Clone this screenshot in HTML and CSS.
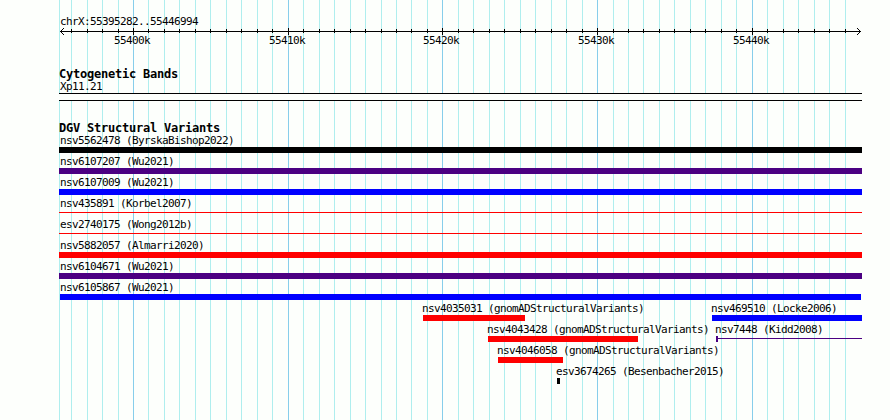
FILE: index.html
```
<!DOCTYPE html>
<html lang="en">
<head>
    <meta charset="UTF-8">
    <title>chrX:55395282..55446994</title>
    <link rel="stylesheet" href="styles.css">
</head>
<body>

<div class="browser">
    <!-- Vertical grid, one line per 1k, darker every 10k -->
    <svg class="grid" width="890" height="420">
        <path class="minor" d="M59.5 0v420M71.5 0v420M87.5 0v420M102.5 0v420M118.5 0v420M148.5 0v420M164.5 0v420M179.5 0v420M195.5 0v420M210.5 0v420M226.5 0v420M241.5 0v420M257.5 0v420M272.5 0v420M303.5 0v420M319.5 0v420M334.5 0v420M350.5 0v420M365.5 0v420M381.5 0v420M396.5 0v420M411.5 0v420M427.5 0v420M458.5 0v420M473.5 0v420M489.5 0v420M504.5 0v420M520.5 0v420M535.5 0v420M551.5 0v420M566.5 0v420M582.5 0v420M613.5 0v420M628.5 0v420M643.5 0v420M659.5 0v420M674.5 0v420M690.5 0v420M705.5 0v420M721.5 0v420M736.5 0v420M767.5 0v420M783.5 0v420M798.5 0v420M814.5 0v420M829.5 0v420M845.5 0v420"/>
        <path class="major" d="M133.5 0v420M288.5 0v420M442.5 0v420M597.5 0v420M752.5 0v420"/>
    </svg>

    <div class="tracks">
        <!-- Scale -->
        <div class="ruler">
            <div class="label region">chrX:55395282..55446994</div>
            <svg class="axis" width="803" height="8" viewBox="59 28 803 8">
                <path d="M60 31.5h801M71.5 29v4M87.5 29v4M102.5 29v4M118.5 29v4M133.5 28v7M148.5 29v4M164.5 29v4M179.5 29v4M195.5 29v4M210.5 29v4M226.5 29v4M241.5 29v4M257.5 29v4M272.5 29v4M288.5 28v7M303.5 29v4M319.5 29v4M334.5 29v4M350.5 29v4M365.5 29v4M381.5 29v4M396.5 29v4M411.5 29v4M427.5 29v4M442.5 28v7M458.5 29v4M473.5 29v4M489.5 29v4M504.5 29v4M520.5 29v4M535.5 29v4M551.5 29v4M566.5 29v4M582.5 29v4M597.5 28v7M613.5 29v4M628.5 29v4M643.5 29v4M659.5 29v4M674.5 29v4M690.5 29v4M705.5 29v4M721.5 29v4M736.5 29v4M752.5 28v7M767.5 29v4M783.5 29v4M798.5 29v4M814.5 29v4M829.5 29v4M845.5 29v4"/>
                <path d="M61 30.5h1M62 29.5h1M63 28.5h1M61 32.5h1M62 33.5h1M63 34.5h1M859 30.5h1M858 29.5h1M857 28.5h1M859 32.5h1M858 33.5h1M857 34.5h1"/>
            </svg>
            <div class="ticks">
                <span class="label" style="margin-left: 55px">55400k</span>
                <span class="label" style="margin-left: 119px">55410k</span>
                <span class="label" style="margin-left: 118px">55420k</span>
                <span class="label" style="margin-left: 119px">55430k</span>
                <span class="label" style="margin-left: 119px">55440k</span>
            </div>
        </div>

        <!-- Cytogenetic bands -->
        <div class="track cyto">
            <h2>Cytogenetic Bands</h2>
            <div class="label">Xp11.21</div>
            <div class="band"></div>
        </div>

        <!-- Structural variants -->
        <div class="track">
            <h2>DGV Structural Variants</h2>
            <div class="lane full"><div class="feature" style="width: 803px"><div class="label">nsv5562478 (ByrskaBishop2022)</div><div class="bar black"></div></div></div>
            <div class="lane full"><div class="feature" style="width: 803px"><div class="label">nsv6107207 (Wu2021)</div><div class="bar indigo"></div></div></div>
            <div class="lane full"><div class="feature" style="width: 803px"><div class="label">nsv6107009 (Wu2021)</div><div class="bar blue"></div></div></div>
            <div class="lane full"><div class="feature" style="width: 803px"><div class="label">nsv435891 (Korbel2007)</div><div class="bar red thin"></div></div></div>
            <div class="lane full"><div class="feature" style="width: 803px"><div class="label">esv2740175 (Wong2012b)</div><div class="bar red thin"></div></div></div>
            <div class="lane full"><div class="feature" style="width: 803px"><div class="label">nsv5882057 (Almarri2020)</div><div class="bar red"></div></div></div>
            <div class="lane full"><div class="feature" style="width: 803px"><div class="label">nsv6104671 (Wu2021)</div><div class="bar indigo"></div></div></div>
            <div class="lane"><div class="feature" style="margin-left: 1px; width: 801px"><div class="label first">nsv6105867 (Wu2021)</div><div class="bar blue"></div></div></div>
            <div class="lane">
                <div class="feature" style="margin-left: 364px; width: 102px"><div class="label">nsv4035031 (gnomADStructuralVariants)</div><div class="bar red"></div></div>
                <div class="feature" style="margin-left: 187px; width: 150px"><div class="label">nsv469510 (Locke2006)</div><div class="bar blue"></div></div>
            </div>
            <div class="lane">
                <div class="feature" style="margin-left: 429px; width: 150px"><div class="label">nsv4043428 (gnomADStructuralVariants)</div><div class="bar red"></div></div>
                <div class="feature" style="margin-left: 78px; width: 146px"><div class="label">nsv7448 (Kidd2008)</div><div class="bar indigo thin capped"></div></div>
            </div>
            <div class="lane"><div class="feature" style="margin-left: 439px; width: 65px"><div class="label">nsv4046058 (gnomADStructuralVariants)</div><div class="bar red"></div></div></div>
            <div class="lane"><div class="feature" style="margin-left: 498px; width: 3px"><div class="label">esv3674265 (Besenbacher2015)</div><div class="bar black"></div></div></div>
        </div>
    </div>
</div>

</body>
</html>
```
FILE: styles.css
```
body {
    margin: 0;
    background-color: #fdfffc;
    color: #000;
    font-family: "DejaVu Sans Mono", "Liberation Mono", monospace;
}
.browser {
    display: grid;
    width: 890px;
    height: 420px;
    overflow: hidden;
}
.grid,
.tracks {
    grid-area: 1 / 1;
}
.grid {
    display: block;
}
.grid path {
    fill: none;
    stroke-width: 1;
}
.grid .minor {
    stroke: #afeeee;
}
.grid .major {
    stroke: #87ceeb;
}
.tracks {
    z-index: 1;
    width: 803px;
    padding: 15px 0 0 59px;
}
.label {
    height: 13px;
    margin-left: 1px;
    font-size: 11px;
    line-height: 13px;
    letter-spacing: -0.622px;
    white-space: nowrap;
}
.ruler {
    height: 53px;
}
.axis {
    display: block;
}
.axis path {
    fill: none;
    stroke: #000;
}
.ticks {
    display: flex;
    margin-top: -2px;
}
.ticks .label {
    width: 36px;
}
h2 {
    height: 12px;
    margin: 0;
    font-size: 12px;
    line-height: 12px;
    letter-spacing: -0.224px;
}
.cyto {
    height: 54px;
}
.band {
    height: 6px;
    border: 1px solid #000;
    border-width: 1px 0;
    background-color: #fdfffc;
}
.lane {
    display: flex;
    height: 21px;
}
.feature .label {
    margin-left: -1px;
}
.full .label {
    margin-left: 1px;
}
.feature .first {
    margin-left: 0;
}
.bar {
    height: 6px;
}
.thin {
    height: 1px;
    margin-top: 2px;
}
.capped::before {
    content: "";
    display: block;
    width: 2px;
    height: 6px;
    background-color: #4b0082;
    transform: translateY(-2px);
}
.black {
    background-color: #000;
}
.indigo {
    background-color: #4b0082;
}
.blue {
    background-color: #00f;
}
.red {
    background-color: #f00;
}
```
